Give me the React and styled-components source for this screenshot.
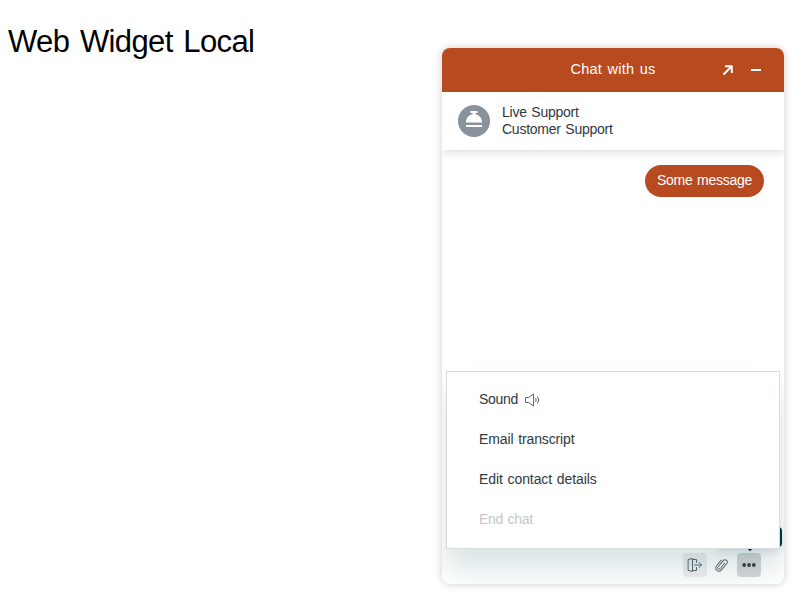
import React from "react";
import styled, { createGlobalStyle } from "styled-components";

const Global = createGlobalStyle`
  * { box-sizing: border-box; }
  body { margin: 0; background: #fff; font-family: "Liberation Sans", Arial, sans-serif; color: #2f3941; overflow: hidden; }
`;
const Page = styled.div`position: relative; height: 600px; overflow: hidden;`;
const Title = styled.h1`
  margin: 0; padding: 21px 0 0 8px; font-size: 31px; line-height: 42px; font-weight: 400;
  color: #000; letter-spacing: -0.6px; word-spacing: 2.5px; white-space: nowrap;
`;
const Widget = styled.section`
  position: absolute; left: 442px; top: 48px; width: 342px; height: 536px;
  border-radius: 8px; background: #fff; box-shadow: 0 0 8px rgba(0, 0, 0, 0.2);
`;
const Clip = styled.div`
  height: 100%; display: flex; flex-direction: column; border-radius: 8px; overflow: hidden; position: relative;
`;
const Header = styled.header`
  position: relative; z-index: 1;
  height: 44px; flex: none; display: grid; grid-template-columns: 1fr auto 1fr; align-items: center;
  background: #b84a1f; color: #fff; padding: 0 18px;
`;
const HeaderTitle = styled.h2`
  grid-column: 2; margin: 0 0 2px; font-size: 14.5px; line-height: 20px; font-weight: 400;
  letter-spacing: 0.2px; word-spacing: 1.4px; white-space: nowrap;
`;
const HeaderActions = styled.div`display: flex; justify-content: flex-end; gap: 8px;`;
const HeaderButton = styled.button`
  width: 20px; height: 20px; padding: 0; border: 0; background: none; color: #fff;
  display: flex; align-items: center; justify-content: center;
`;
const Agent = styled.div`
  height: 58px; flex: none; display: flex; align-items: center; gap: 12px; padding: 0 16px;
  background: #fff; box-shadow: 0 1px 10px rgba(0, 0, 0, 0.18);
`;
const Avatar = styled.span`
  width: 32px; height: 32px; border-radius: 50%; background: #87929d; display: flex;
`;
const AgentText = styled.div`font-size: 14px; line-height: 17px;`;
const Line = styled.div`letter-spacing: -0.25px; word-spacing: 1px; white-space: nowrap;`;
const Log = styled.div`flex: 1; display: flex; justify-content: flex-end; align-items: flex-start; padding: 15px 20px;`;
const Bubble = styled.div`
  height: 32px; width: 119px; border-radius: 16px; background: #b84a1f; color: #fff;
  font-size: 14px; line-height: 31px; padding-left: 12px; white-space: nowrap;
  letter-spacing: -0.27px; word-spacing: 1px;
`;
const Footer = styled.footer`
  height: 38px; flex: none; display: flex; align-items: flex-start; justify-content: flex-end;
  gap: 3px; padding: 7px 23px 0 0;
`;
const Tool = styled.button`
  width: 24px; height: 24px; padding: 0; border: 0; border-radius: 4px; color: ${(p) => p.$color || "#5c6970"};
  background: ${(p) => p.$bg || "transparent"}; display: flex; align-items: center; justify-content: center;
`;
const Tooltip = styled.div`
  position: absolute; right: 2px; bottom: 37px; width: 65px; height: 20px; border-radius: 4px; background: #03363d;
  box-shadow: 0 4px 10px rgba(4, 68, 77, 0.15);
  &::after {
    content: ""; position: absolute; left: 30px; bottom: -3px; width: 6px; height: 6px;
    background: #03363d; transform: rotate(45deg);
  }
`;
const Menu = styled.ul`
  position: absolute; left: 4px; top: 323px; width: 334px; height: 178px; margin: 0; padding: 8px 0;
  list-style: none; background: #fff; border: 1px solid #d8dcde;
  box-shadow: 0 20px 28px 0 rgba(4, 68, 77, 0.15);
`;
const MenuItem = styled.li`
  height: 40px; display: flex; align-items: center; gap: 7px; padding: 0 0 2px 32px; font-size: 14px;
  line-height: 20px; white-space: nowrap; color: ${(p) => (p.$disabled ? "#c2c8cc" : "#2f3941")};
  letter-spacing: ${(p) => p.$spacing || 0}px; word-spacing: 1px;
  svg { margin-top: 2px; }
`;

const Bell = () => (
  <svg width="32" height="32" fill="#fff">
    <path d="M12.500 6h7v2h-2v1.200c3.800.8 6.500 3.800 6.500 7.800H8c0-4 2.700-7 6.500-7.800V8h-2zM8 20h16v2H8z" />
    <path d="M8 17h16v1H8z" opacity=".5" />
  </svg>
);
const Popout = () => (
  <svg width="12" height="12" viewBox="0 0 12 12" fill="none" stroke="#fff" strokeWidth="2">
    <path d="M3 2.200h6.800V9M9.600 2.400L1.500 10.500" strokeLinejoin="round" />
  </svg>
);
const Minimize = () => (
  <svg width="12" height="12" viewBox="0 0 12 12" stroke="#fff" strokeWidth="2"><path d="M1 6h10" /></svg>
);
const Sound = () => (
  <svg width="15" height="14" viewBox="0 0 15 14" fill="none" stroke="#5c6970" strokeLinejoin="round">
    <path d="M.5 4.500h3.200l4.800-3.500v12l-4.800-3.500H.5zM10.500 5q1.400 2 0 4M12.500 3.500q2.600 3.500 0 7" />
  </svg>
);
const Exit = () => (
  <svg width="16" height="16" viewBox="0 0 16 16" fill="none" stroke="currentColor" strokeLinejoin="round" strokeLinecap="round">
    <path d="M5.500 2.500h4v3M9.500 10.500v3h-4M1.500 2.500l4-1v13l-4-1zM7.500 8h7M12 5.500L14.500 8 12 10.500" />
  </svg>
);
const Clipper = () => (
  <svg width="16" height="16" viewBox="0 0 16 16" fill="none" stroke="currentColor" strokeLinecap="round">
    <path transform="translate(-.7 0) rotate(40 8 8) translate(.7 .6) scale(.92)" d="M9.500 4v7.700c0 .8-.7 1.500-1.500 1.500s-1.500-.7-1.500-1.500V3C6.500 1.600 7.600.5 9 .5s2.500 1.100 2.500 2.500v9c0 1.900-1.600 3.500-3.500 3.500S4.500 13.900 4.500 12V4" />
  </svg>
);
const Dots = () => (
  <svg width="16" height="16" viewBox="0 0 16 16" fill="currentColor">
    <circle cx="3.200" cy="8" r="1.900" /><circle cx="8" cy="8" r="1.900" /><circle cx="12.800" cy="8" r="1.900" />
  </svg>
);

export default function App() {
  return (
    <Page>
      <Global />
      <Title>Web Widget Local</Title>
      <Widget>
        <Clip>
          <Header>
            <HeaderTitle>Chat with us</HeaderTitle>
            <HeaderActions>
              <HeaderButton aria-label="Popout"><Popout /></HeaderButton>
              <HeaderButton aria-label="Minimize"><Minimize /></HeaderButton>
            </HeaderActions>
          </Header>
          <Agent>
            <Avatar><Bell /></Avatar>
            <AgentText>
              <Line>Live Support</Line>
              <Line>Customer Support</Line>
            </AgentText>
          </Agent>
          <Log><Bubble>Some message</Bubble></Log>
          <Tooltip />
          <Menu>
            <MenuItem $spacing={-0.3}>Sound <Sound /></MenuItem>
            <MenuItem $spacing={-0.12}>Email transcript</MenuItem>
            <MenuItem $spacing={-0.09}>Edit contact details</MenuItem>
            <MenuItem $spacing={-0.32} $disabled>End chat</MenuItem>
          </Menu>
          <Footer>
            <Tool $bg="rgba(47,57,65,.08)" aria-label="End chat"><Exit /></Tool>
            <Tool aria-label="Attach file"><Clipper /></Tool>
            <Tool $bg="rgba(47,57,65,.2)" $color="#39434b" aria-label="Menu"><Dots /></Tool>
          </Footer>
        </Clip>
      </Widget>
    </Page>
  );
}
